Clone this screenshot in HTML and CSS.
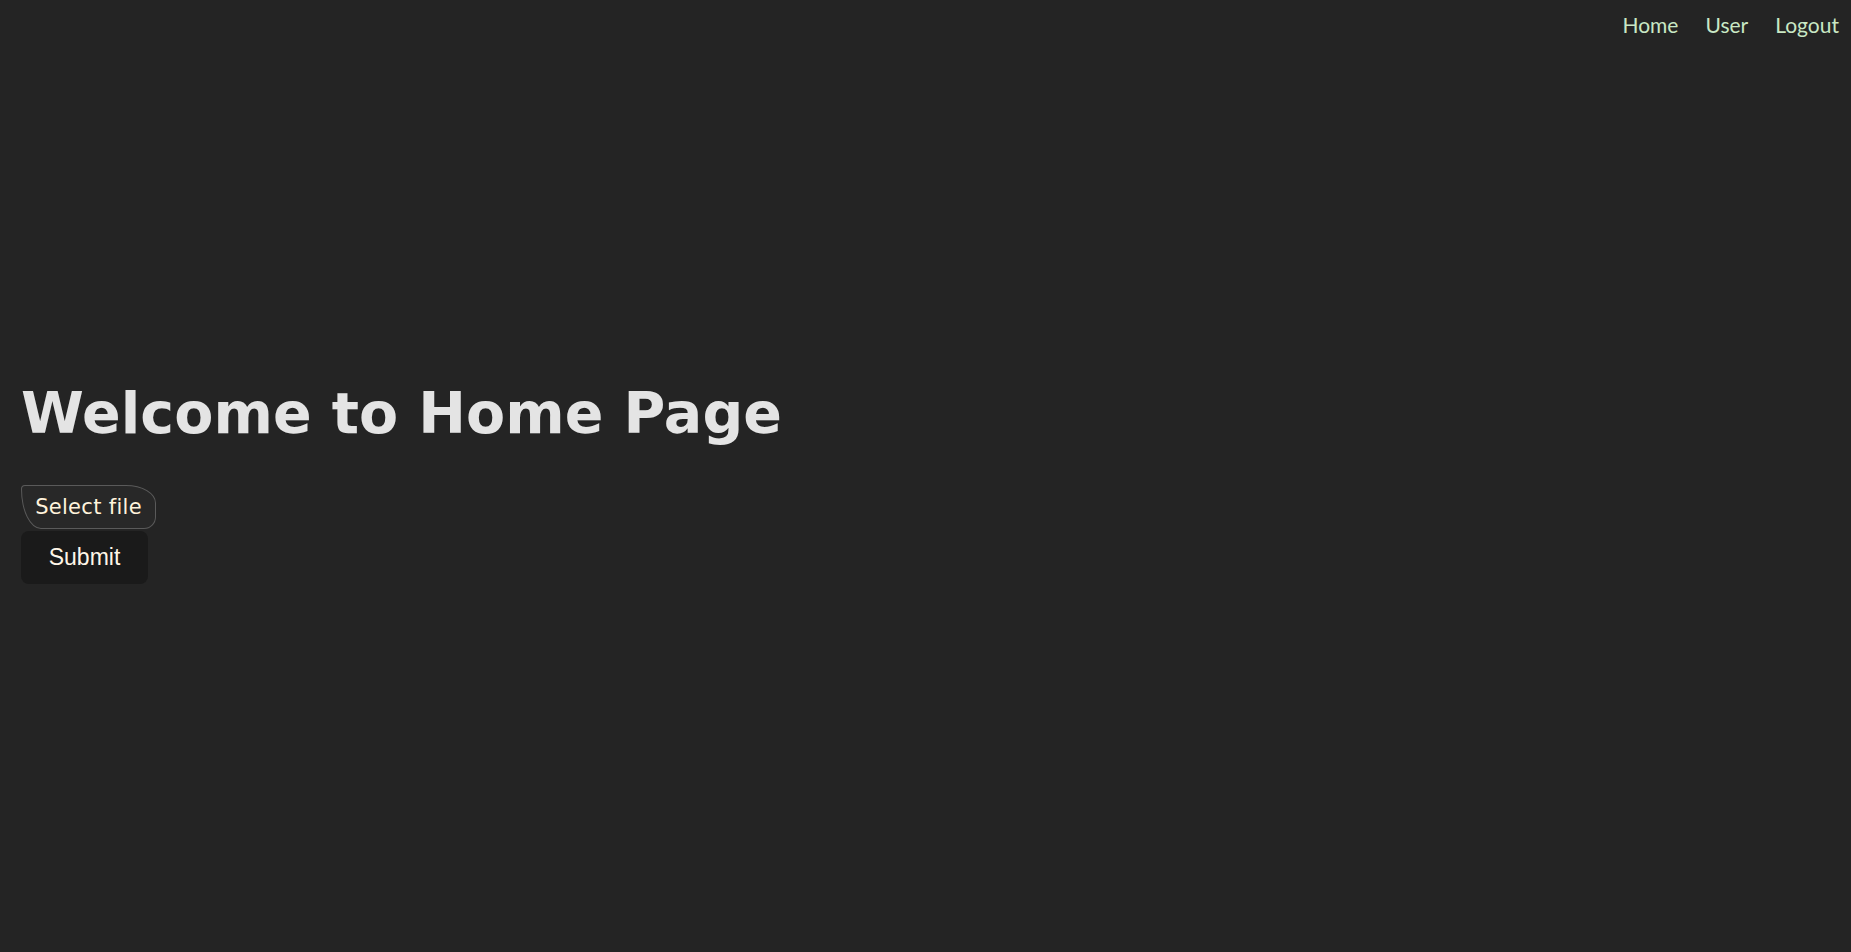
FILE: index.html
```html
<!DOCTYPE html>
<html lang="en">
<head>
<meta charset="utf-8">
<title>Home</title>
<link rel="stylesheet" href="styles.css">
</head>
<body>
  <nav class="nav">
    <a class="nav-link" href="#">Home</a>
    <a class="nav-link" href="#">User</a>
    <a class="nav-link" href="#">Logout</a>
  </nav>
  <main class="main">
    <h1 class="title">Welcome to Home Page</h1>
    <form class="upload">
      <label class="file-btn">Select file</label>
      <button class="submit-btn" type="button">Submit</button>
    </form>
  </main>
</body>
</html>
```
FILE: styles.css
```css
html, body {
  margin: 0;
  padding: 0;
}
body {
  background: #242424;
  min-height: 100vh;
  display: flex;
  flex-direction: column;
}
.nav {
  display: flex;
  justify-content: flex-end;
  gap: 27px;
  padding: 12px 12px 0;
}
.nav-link {
  font-family: Lato, "Noto Sans", sans-serif;
  font-size: 21px;
  color: #c9e8c4;
  text-decoration: none;
}
.main {
  display: flex;
  flex-direction: column;
  align-items: flex-start;
  padding: 343px 21px 0;
}
.title {
  margin: 0 0 39px;
  font-family: "DejaVu Sans", Verdana, sans-serif;
  font-weight: bold;
  font-size: 57px;
  letter-spacing: 0.1px;
  color: #e4e4e4;
}
.upload {
  display: flex;
  flex-direction: column;
  align-items: flex-start;
  gap: 2px;
}
.file-btn {
  box-sizing: border-box;
  width: 135px;
  height: 44px;
  display: flex;
  align-items: center;
  justify-content: center;
  padding-bottom: 1px;
  border: 1.5px solid #5a5a5a;
  border-radius: 4px 30px 12px 20px / 4px 18px 12px 40px;
  background: #282828;
  color: #fff3dc;
  font-family: "DejaVu Sans", sans-serif;
  font-size: 21px;
  letter-spacing: 0.3px;
}
.submit-btn {
  box-sizing: border-box;
  width: 127px;
  height: 53px;
  border: none;
  border-radius: 8px;
  background: #1a1a1a;
  color: #fff6e8;
  font-family: "Liberation Sans", Arial, sans-serif;
  font-size: 23px;
  padding: 0;
}
```
